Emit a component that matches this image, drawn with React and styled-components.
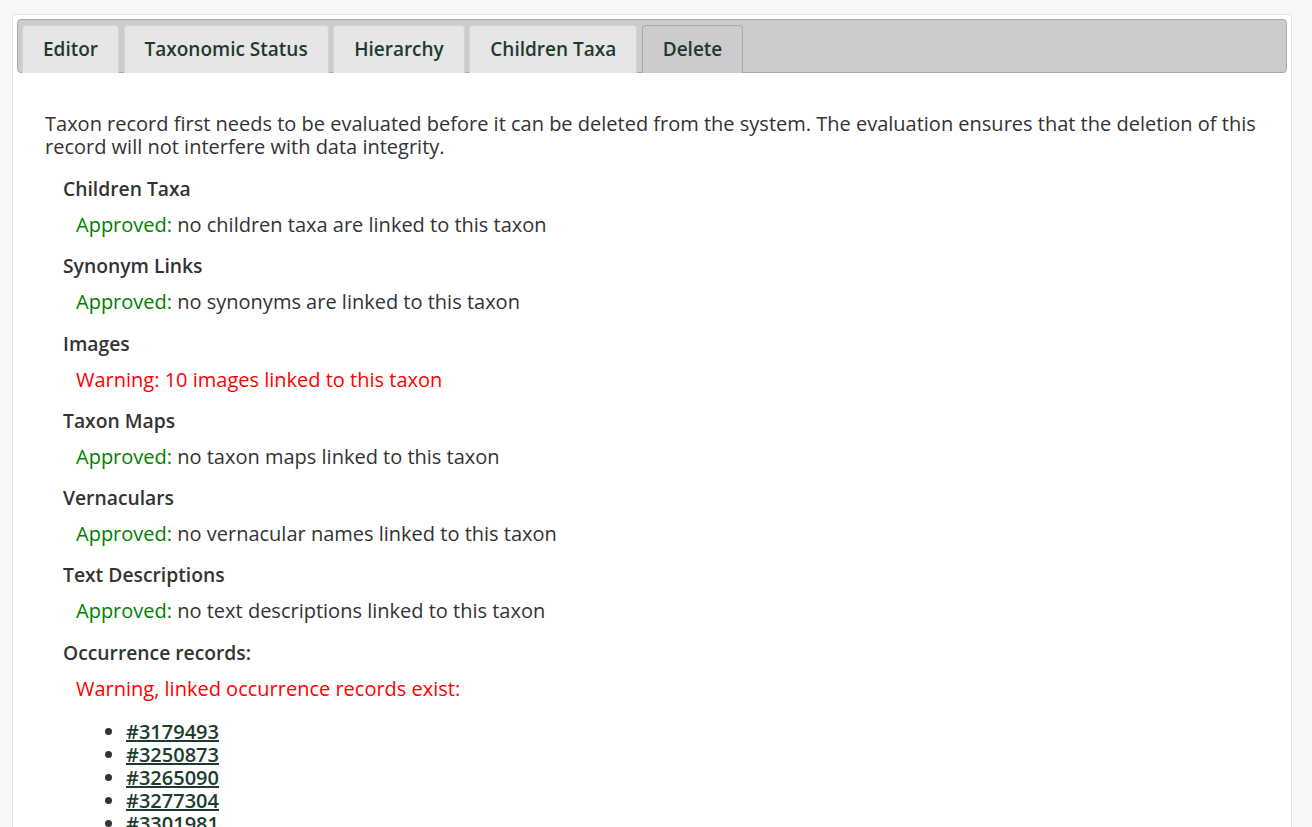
import styled, { createGlobalStyle } from "styled-components";

const GlobalStyle = createGlobalStyle`
  html, body {
    margin: 0;
    padding: 0;
    background: #f7f7f7;
  }
  body {
    font-family: "Open Sans", "Liberation Sans", sans-serif;
    color: #333;
  }
`;

const Page = styled.div`
  padding: 14px 20px 0 12px;
  height: 827px;
  overflow: hidden;
  box-sizing: border-box;
`;

const Card = styled.div`
  background: #fff;
  border: 1px solid #e4e4e4;
  border-radius: 3px;
  padding: 4px;
  min-height: 900px;
`;

const TabBar = styled.ul`
  display: flex;
  gap: 4.5px;
  list-style: none;
  margin: 0;
  padding: 5px 4px 0;
  height: 47px;
  background: #cccccc;
  border: 1px solid #aaaaaa;
  border-radius: 4px;
`;

const Tab = styled.li`
  display: flex;
  align-items: center;
  padding: 0 20px 2px;
  margin-bottom: -1px;
  height: 48px;
  box-sizing: border-box;
  font-size: 19px;
  font-weight: 600;
  color: #1d3b2e;
  background: ${({ $active }) => ($active ? "#cccccc" : "#e6e6e6")};
  border: 1px solid ${({ $active }) => ($active ? "#a8a8a8" : "#d3d3d3")};
  border-bottom: none;
  border-radius: 4px 4px 0 0;
  cursor: pointer;
`;

const Panel = styled.div`
  padding: 39px 28px 0;
`;

const Intro = styled.p`
  margin: 0 0 19px;
  font-size: 20px;
  line-height: 23px;
`;

const Section = styled.div`
  padding-left: 18px;
`;

const Heading = styled.div`
  font-size: 19.3px;
  font-weight: 600;
  line-height: 23px;
  margin-bottom: 13px;
`;

const Status = styled.div`
  padding-left: 13px;
  font-size: 20px;
  line-height: 23px;
  margin-bottom: 18.3px;
  color: ${({ $warn }) => ($warn ? "#ff0000" : "#333")};
`;

const Approved = styled.span`
  color: #008000;
`;

const RecordList = styled.ul`
  margin: 20px 0 0;
  padding-left: 81px;
  font-size: 20px;
  line-height: 23px;
`;

const RecordLink = styled.a`
  color: #1d3b2e;
  font-weight: 600;
  text-decoration: underline;
`;

const tabs = ["Editor", "Taxonomic Status", "Hierarchy", "Children Taxa", "Delete"];

const checks = [
  { title: "Children Taxa", text: "no children taxa are linked to this taxon" },
  { title: "Synonym Links", text: "no synonyms are linked to this taxon" },
  { title: "Images", warning: "Warning: 10 images linked to this taxon" },
  { title: "Taxon Maps", text: "no taxon maps linked to this taxon" },
  { title: "Vernaculars", text: "no vernacular names linked to this taxon" },
  { title: "Text Descriptions", text: "no text descriptions linked to this taxon" },
];

const records = ["3179493", "3250873", "3265090", "3277304", "3301981", "3312004"];

export default function App() {
  return (
    <>
      <GlobalStyle />
      <Page>
        <Card>
          <TabBar>
            {tabs.map((t) => (
              <Tab key={t} $active={t === "Delete"}>
                {t}
              </Tab>
            ))}
          </TabBar>
          <Panel>
            <Intro>
              Taxon record first needs to be evaluated before it can be deleted from the system. The
              evaluation ensures that the deletion of this record will not interfere with data
              integrity.
            </Intro>
            <Section>
              {checks.map((c) => (
                <div key={c.title}>
                  <Heading>{c.title}</Heading>
                  {c.warning ? (
                    <Status $warn>{c.warning}</Status>
                  ) : (
                    <Status>
                      <Approved>Approved:</Approved> {c.text}
                    </Status>
                  )}
                </div>
              ))}
              <Heading>Occurrence records:</Heading>
              <Status $warn>Warning, linked occurrence records exist:</Status>
            </Section>
            <RecordList>
              {records.map((r) => (
                <li key={r}>
                  <RecordLink href="#">#{r}</RecordLink>
                </li>
              ))}
            </RecordList>
          </Panel>
        </Card>
      </Page>
    </>
  );
}
